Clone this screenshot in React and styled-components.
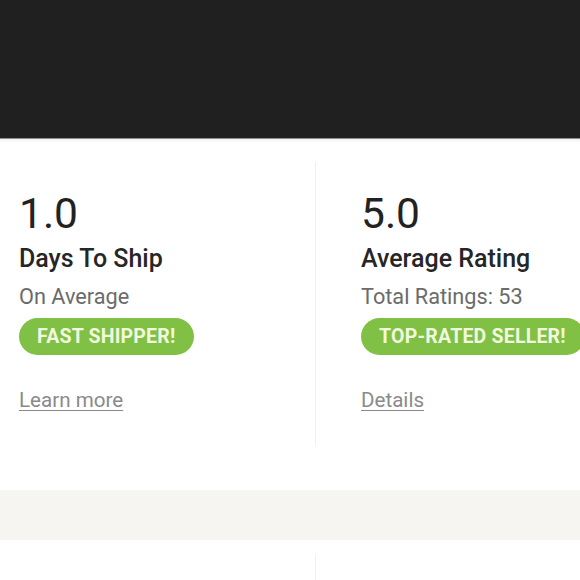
import React from 'react';
import styled, { createGlobalStyle } from 'styled-components';

const GlobalStyle = createGlobalStyle`
  html, body {
    margin: 0;
    padding: 0;
    background: #ffffff;
    font-family: Roboto, "Liberation Sans", Arial, sans-serif;
    overflow: hidden;
  }
`;

const Page = styled.div`
  width: 580px;
  height: 580px;
  overflow: hidden;
`;

const Header = styled.header`
  height: 138px;
  background: #202020;
  border-bottom: 1px solid #8e8e8e;
`;

const Fade = styled.div`
  height: 4px;
  background: linear-gradient(#f1f1ef, #ffffff);
`;

const Stats = styled.section`
  display: grid;
  grid-template-columns: 316px 1fr;
  padding: ${(p) => p.$top}px 0 ${(p) => p.$bottom}px;
`;

const Column = styled.div`
  height: ${(p) => p.$height}px;
  padding: 28px 0 0 ${(p) => p.$indent}px;
  border-right: ${(p) => (p.$divider ? '1px solid #efefef' : 'none')};
  white-space: nowrap;
  box-sizing: border-box;
`;

const Figure = styled.div`
  font-size: 42.5px;
  line-height: 48px;
  color: #222222;
`;

const Label = styled.div`
  margin-top: 7px;
  font-size: 25px;
  line-height: 28px;
  font-weight: 500;
  color: #262626;
`;

const Sub = styled.div`
  margin-top: 11px;
  font-size: 21.7px;
  line-height: 26px;
  color: #6b6b6b;
`;

const Pill = styled.div`
  margin-top: 8px;
  display: inline-flex;
  align-items: center;
  height: 37px;
  padding: 0 19px 0 18px;
  border-radius: 19px;
  background: #80c045;
  color: #f1f9df;
  font-size: 19.5px;
  font-weight: 700;
  letter-spacing: 0.2px;
`;

const More = styled.a`
  display: block;
  margin-top: 33px;
  font-size: 20.6px;
  line-height: 24px;
  color: #8a8a8a;
  text-decoration: underline;
  text-underline-offset: 3px;
  text-decoration-thickness: 1px;
`;

const Band = styled.div`
  height: 50px;
  background: #f6f5f1;
`;

const stats = [
  { value: '1.0', label: 'Days To Ship', sub: 'On Average', badge: 'FAST SHIPPER!', link: 'Learn more' },
  { value: '5.0', label: 'Average Rating', sub: 'Total Ratings: 53', badge: 'TOP-RATED SELLER!', link: 'Details' },
];

export default function App() {
  return (
    <Page>
      <GlobalStyle />
      <Header />
      <Fade />
      <Stats $top={19} $bottom={45}>
        {stats.map((s, i) => (
          <Column key={s.label} $height={283} $indent={i === 0 ? 19 : 45} $divider={i === 0}>
            <Figure>{s.value}</Figure>
            <Label>{s.label}</Label>
            <Sub>{s.sub}</Sub>
            <Pill>{s.badge}</Pill>
            <More href="#">{s.link}</More>
          </Column>
        ))}
      </Stats>
      <Band />
      <Stats $top={15} $bottom={0}>
        <Column $height={100} $indent={19} $divider />
        <Column $height={100} $indent={45} />
      </Stats>
    </Page>
  );
}
